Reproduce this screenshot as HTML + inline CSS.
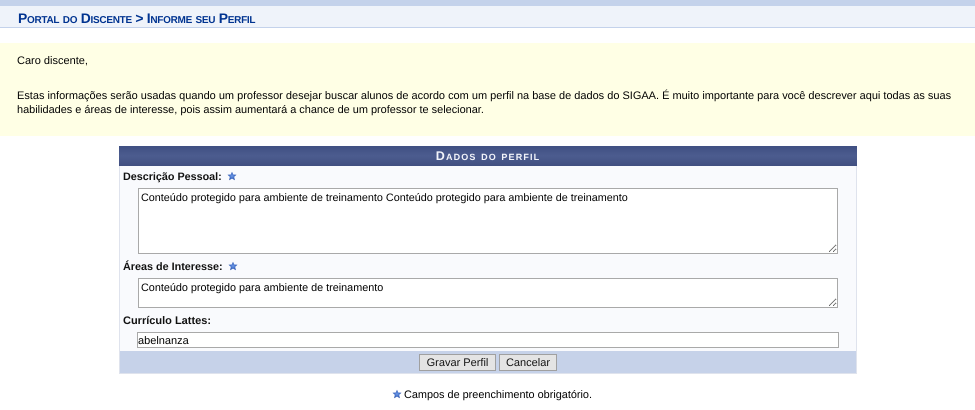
<!DOCTYPE html>
<html lang="pt">
<head>
<meta charset="utf-8">
<title>Informe seu Perfil</title>
<style>
html,body{margin:0;padding:0;background:#fff;width:975px;height:410px;overflow:hidden}
body{position:relative;font-family:"Liberation Sans",sans-serif;font-size:11px;color:#000;text-rendering:geometricPrecision}
div,textarea,input,button,span.a{position:absolute;box-sizing:border-box;text-rendering:geometricPrecision}
#top{left:0;top:0;width:975px;height:6px;background:#C4D2EB}
#head{left:0;top:6px;width:975px;height:22px;background:#EFF3FA;border-bottom:1px solid #C4D2EB}
#title{left:18px;top:10px;font-size:13.9px;letter-spacing:-.29px;line-height:16px;font-weight:bold;font-variant:small-caps;color:#003390;white-space:nowrap}
#info{left:0;top:43px;width:975px;height:93px;background:#FFFFE5}
.t{white-space:nowrap;line-height:14px;font-size:11px}
#box{left:119px;top:146px;width:738px;height:228px;background:#F9FAFD;border-left:1px solid #DFE3ED;border-right:1px solid #DFE3ED;border-bottom:1px solid #DFE3ED}
#cap{left:119px;top:146px;width:738px;height:20px;background:linear-gradient(#3F4F82,#4C5C8F 50%,#414F80);color:#F2F4FA;font-weight:bold;font-size:12.5px;font-variant:small-caps;letter-spacing:1.13px;text-align:center;line-height:20px}
.l{font-weight:bold;white-space:nowrap;line-height:14px;font-size:11px;color:#111}
textarea{margin:0;padding:3px 2px 2px;border:1px solid #A9A9A9;background:#fff;font:10.82px/13px "Liberation Sans",sans-serif;color:#000;outline:none}
input{margin:0;padding:1px 0 0;border:1px solid #A9A9A9;background:#fff;font:11px "Liberation Sans",sans-serif;color:#000;outline:none}
#foot{left:120px;top:351px;width:736px;height:22px;background:#C6D2E9}
button{margin:0;padding:0;height:17px;top:354px;background:#E4E4E4;border:1px solid #A0A0A0;font:11px "Liberation Sans",sans-serif;color:#111}
svg{position:absolute}
</style>
</head>
<body>
<svg width="0" height="0"><defs><radialGradient id="g" cx="50%" cy="50%" r="55%"><stop offset="0" stop-color="#6D9AEA"/><stop offset="1" stop-color="#1F48A4"/></radialGradient></defs></svg>
<div id="top"></div>
<div id="head"></div>
<div id="title">Portal do Discente &gt; Informe seu Perfil</div>
<div id="info"></div>
<div class="t" style="left:17px;top:54px">Caro discente,</div>
<div class="t" style="left:17px;top:89px;font-size:10.977px">Estas informações serão usadas quando um professor desejar buscar alunos de acordo com um perfil na base de dados do SIGAA. É muito importante para você descrever aqui todas as suas</div>
<div class="t" style="left:17px;top:103px;font-size:10.93px">habilidades e áreas de interesse, pois assim aumentará a chance de um professor te selecionar.</div>

<div id="box"></div>
<div id="cap">Dados do perfil</div>

<div class="l" style="left:123px;top:170px;font-size:10.78px">Descrição Pessoal:</div>
<svg style="left:227px;top:171px" width="10" height="10" viewBox="0 0 10 10"><path d="M5 .8 6.3 3.5 9.5 3.8 7.2 5.9 7.9 9.2 5 7.6 2.1 9.2 2.8 5.9 .5 3.8 3.7 3.5Z" fill="url(#g)"/></svg>
<textarea readonly style="left:138px;top:188px;width:700px;height:66px;font-size:10.8px">Conteúdo protegido para ambiente de treinamento Conteúdo protegido para ambiente de treinamento</textarea>

<div class="l" style="left:123px;top:260px;font-size:10.8px">Áreas de Interesse:</div>
<svg style="left:228px;top:261px" width="10" height="10" viewBox="0 0 10 10"><path d="M5 .8 6.3 3.5 9.5 3.8 7.2 5.9 7.9 9.2 5 7.6 2.1 9.2 2.8 5.9 .5 3.8 3.7 3.5Z" fill="url(#g)"/></svg>
<textarea readonly style="left:138px;top:278px;width:700px;height:30px">Conteúdo protegido para ambiente de treinamento</textarea>

<div class="l" style="left:123px;top:314px">Currículo Lattes:</div>
<input readonly value="abelnanza" style="left:137px;top:332px;width:702px;height:16px">

<div id="foot"></div>
<button style="left:419px;width:77px">Gravar Perfil</button>
<button style="left:499px;width:58px">Cancelar</button>

<svg style="left:392px;top:389px" width="10" height="10" viewBox="0 0 10 10"><path d="M5 .8 6.3 3.5 9.5 3.8 7.2 5.9 7.9 9.2 5 7.6 2.1 9.2 2.8 5.9 .5 3.8 3.7 3.5Z" fill="url(#g)"/></svg>
<div class="t" style="left:404px;top:388px;font-size:10.88px">Campos de preenchimento obrigatório.</div>
</body>
</html>
